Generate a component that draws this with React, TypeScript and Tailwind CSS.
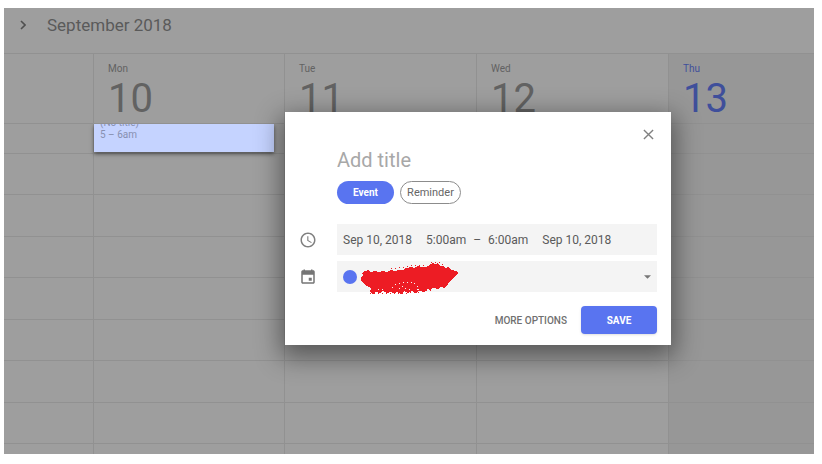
import { useState } from "react"

const days = [
  { name: "Mon", date: 10 },
  { name: "Tue", date: 11 },
  { name: "Wed", date: 12 },
  { name: "Thu", date: 13, today: true },
]

const hours = [1, 2, 3, 4, 5, 6, 7]

const columns = "grid grid-cols-[89px_191fr_192fr_192fr_146fr]"

function WeekHeader() {
  return (
    <div className={columns + " h-[70px] border-b border-[#919191]"}>
      <div />
      {days.map((day) => (
        <div
          key={day.name}
          className={
            day.today
              ? "border-l border-[#919191] bg-[#979797] pl-[14px] pt-2 text-[#3f4f9b]"
              : "border-l border-[#919191] pl-[14px] pt-2 text-[#626262]"
          }
        >
          <div className="text-[10px] leading-[14px]">{day.name}</div>
          <div className="text-[40px] leading-[45px]">{day.date}</div>
        </div>
      ))}
    </div>
  )
}

function HourCells() {
  return (
    <div className="flex min-h-0 flex-1 flex-col">
      <div className="h-[30px] border-b border-[#919191]" />
      <div className="grid h-[290px] shrink-0 auto-rows-fr">
        {hours.map((hour) => (
          <div key={hour} className="border-b border-[#919191]" />
        ))}
      </div>
    </div>
  )
}

function WeekGrid() {
  return (
    <div className={columns + " h-[330px] overflow-hidden"}>
      <HourCells />
      {days.map((day) => (
        <div
          key={day.name}
          className={
            day.today
              ? "relative border-l border-[#919191] bg-[#979797]"
              : "relative border-l border-[#919191]"
          }
        >
          <HourCells />
          {day.date === 10 && (
            <div className="absolute left-0 right-[10px] top-0 h-7 overflow-hidden bg-[#c5d3ff] pl-[6px] text-[10px] leading-[12px] text-[#8790b0] shadow-[0_2px_4px_rgba(0,0,0,0.5)]">
              <div className="-mt-[7px]">(No title)</div>
              <div>5 – 6am</div>
            </div>
          )}
        </div>
      ))}
    </div>
  )
}

function ClockIcon() {
  return (
    <svg viewBox="0 0 24 24" className="h-[18px] w-[18px]" fill="#808080" aria-hidden="true">
      <path d="M11.99 2C6.47 2 2 6.48 2 12s4.47 10 9.99 10C17.52 22 22 17.52 22 12S17.52 2 11.99 2zM12 20c-4.42 0-8-3.58-8-8s3.58-8 8-8 8 3.58 8 8-3.58 8-8 8zm.5-13H11v6l5.25 3.15.75-1.23-4.5-2.67z" />
    </svg>
  )
}

function CalendarIcon() {
  return (
    <svg viewBox="0 0 24 24" className="h-[18px] w-[18px]" fill="#757575" aria-hidden="true">
      <path d="M17 13h-4v4h4v-4zM16 2v1H8V2H6v1H5c-1.11 0-1.99.9-1.99 2L3 19c0 1.1.89 2 2 2h14c1.1 0 2-.9 2-2V5c0-1.1-.9-2-2-2h-1V2h-2zm3 17H5V9h14v10z" />
    </svg>
  )
}

function Scribble() {
  return (
    <svg viewBox="0 0 98 36" className="h-9 w-[98px]" shapeRendering="crispEdges" aria-hidden="true">
      <path
        fill="#ed1c24"
        d="M0 19L2 16L1 14L4 12L7 11L10 13L14 12L18 13L22 12L26 13L30 11L34 12L38 11L42 11L45 9L50 8L53 9L57 7L60 8L64 8L67 7L69 5L72 4L74 5L77 4L79 7L82 7L85 9L87 8L90 11L96 12L97 14L93 18L91 21L88 23L86 27L83 29L80 28L77 30L72 29L69 31L66 30L63 33L58 32L55 34L51 32L47 34L43 32L40 35L36 33L33 34L29 33L26 34L22 32L19 34L15 33L12 35L9 33L10 30L8 28L5 27L3 24L0 22Z"
      />
      <path
        stroke="#f5f5f5"
        fill="none"
        strokeDasharray="1 3"
        d="M34 26L41 24L49 23L55 25L58 29L56 32M31 29L35 27M17 31L25 30M38 30L43 27L45 31M48 31L51 28"
      />
      <path
        stroke="#ed1c24"
        fill="none"
        strokeDasharray="1 3"
        d="M9 34L22 34L40 35L58 33L70 31M30 10L44 8L56 6L66 6M70 3L77 3L84 7"
      />
    </svg>
  )
}

function EventDialog() {
  const [title, setTitle] = useState("")

  return (
    <div
      role="dialog"
      aria-label="New event"
      className="absolute left-[281px] top-[104px] w-[386px] bg-white pb-[11px] pl-[14px] pr-[14px] text-[#5a5a5a] shadow-[0_8px_24px_4px_rgba(0,0,0,0.45)]"
    >
      <div className="flex h-9 items-end justify-end">
        <button aria-label="Close" className="flex h-7 w-[18px] items-center justify-center">
          <svg viewBox="0 0 12 12" className="h-[11px] w-[11px]" stroke="#808080" strokeWidth="1.5" aria-hidden="true">
            <path d="M1 1l10 10M11 1L1 11" />
          </svg>
        </button>
      </div>
      <div className="pl-[38px]">
        <input
          aria-label="Add title"
          placeholder="Add title"
          value={title}
          onChange={(e) => setTitle(e.target.value)}
          className="block h-6 w-full text-[20px] leading-6 outline-none placeholder:text-[#a8a8a8]"
        />
        <div className="mt-[9px] flex gap-[6px] text-[11px] leading-5">
          <button className="h-[23px] w-[57px] rounded-full bg-[#5974f0] text-[10px] font-bold text-white">Event</button>
          <button className="h-[23px] w-[61px] rounded-full border border-[#8c8c8c] text-[#666666]">Reminder</button>
        </div>
      </div>
      <div className="mt-5 flex items-center gap-5">
        <ClockIcon />
        <div className="flex h-[31px] flex-1 items-center bg-[#f4f4f4] pl-[6px] text-[12px]">
          <button>Sep 10, 2018</button>
          <button className="ml-[14px]">5:00am</button>
          <span className="mx-[7px]">–</span>
          <button>6:00am</button>
          <button className="ml-[14px]">Sep 10, 2018</button>
        </div>
      </div>
      <div className="mt-[6px] flex items-center gap-5">
        <CalendarIcon />
        <button aria-label="Choose calendar" className="flex h-[31px] flex-1 items-center bg-[#f4f4f4] pl-[6px] pr-[6px]">
          <span className="mr-1 h-[14px] w-[14px] rounded-full bg-[#5974f0]" />
          <Scribble />
          <svg viewBox="0 0 8 4" className="ml-auto h-1 w-[7px]" fill="#777777" aria-hidden="true">
            <path d="M0 0h8L4 4z" />
          </svg>
        </button>
      </div>
      <div className="mt-[14px] flex items-center justify-end gap-[14px] text-[10px]">
        <button className="font-medium text-[#707070]">MORE OPTIONS</button>
        <button className="h-7 w-[76px] rounded-sm bg-[#5974f0] font-bold text-white shadow-sm">SAVE</button>
      </div>
    </div>
  )
}

export default function App() {
  return (
    <div className="bg-white pb-[10px] pl-1 pr-2 pt-2 font-[Roboto,sans-serif]">
      <main className="relative bg-[#9e9e9e]">
        <header className="flex h-[46px] items-center border-b border-[#919191] pb-[11px] pl-[15px] text-[#5a5a5a]">
          <button aria-label="Next week" className="flex h-5 w-2 items-center justify-center">
            <svg viewBox="0 0 6 10" className="h-[10px] w-[6px]" fill="none" stroke="#505050" strokeWidth="1.6" aria-hidden="true">
              <path d="M1 1l4 4-4 4" />
            </svg>
          </button>
          <h1 className="ml-5 text-[17px] leading-5">September 2018</h1>
        </header>
        <WeekHeader />
        <WeekGrid />
        <EventDialog />
      </main>
    </div>
  )
}
